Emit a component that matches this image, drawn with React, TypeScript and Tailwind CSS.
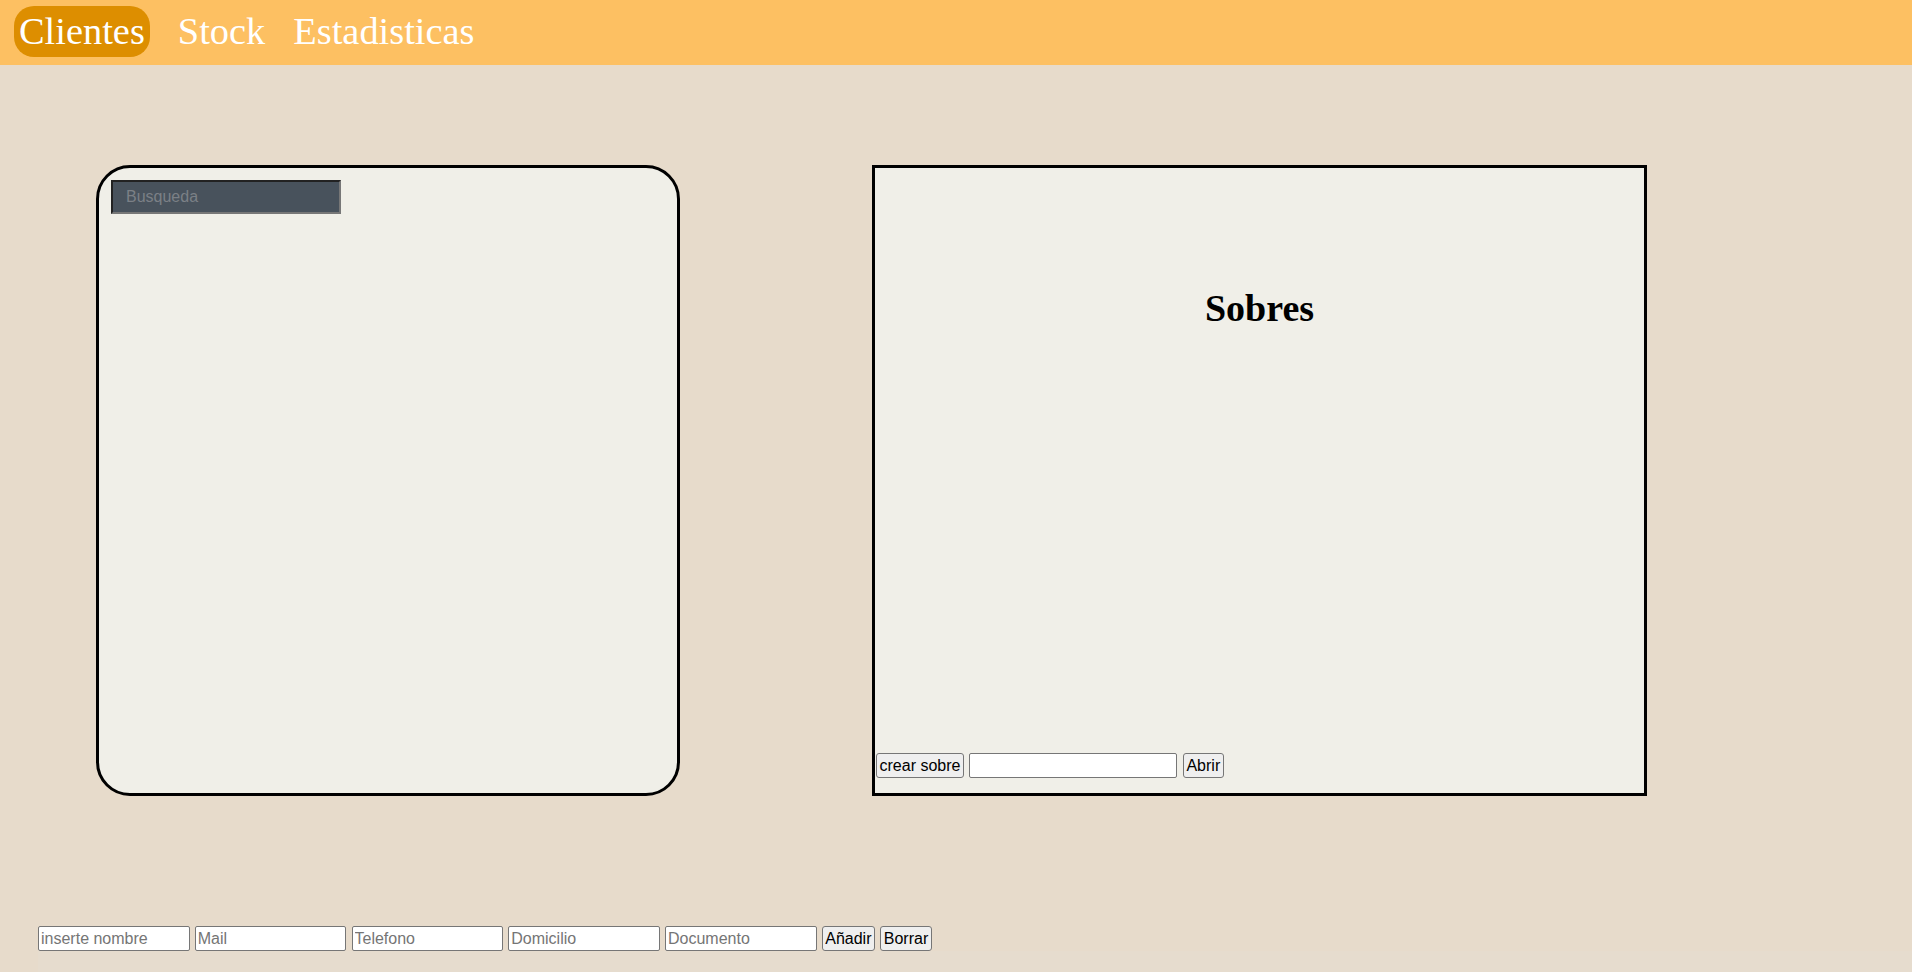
import React from "react";

const fieldClass =
  "w-[151.5px] h-[25px] px-[2px] bg-white border border-[#767676] rounded-[2px] text-[16px] text-black placeholder:text-[#757575] outline-none";
const buttonClass =
  "h-[25px] px-[2.5px] bg-[#EFEFEF] border border-[#767676] rounded-[3px] text-[16px] text-black leading-none";

export default function App() {
  const campos = ["inserte nombre", "Mail", "Telefono", "Domicilio", "Documento"];

  return (
    <div className="min-h-screen flex flex-col bg-[#E7DBCB] font-['Liberation_Sans',Arial,sans-serif]">
      {/* Navbar */}
      <nav className="h-[65px] shrink-0 bg-[#FDC062] flex items-start pt-[6px] font-['Liberation_Serif','Times_New_Roman',serif] text-white text-[38.4px] leading-none">
        <a className="ml-[14px] h-[51px] px-[5px] flex items-center rounded-[20px] bg-[#DD8E00]">Clientes</a>
        <a className="ml-[28px] h-[51px] flex items-center">Stock</a>
        <a className="ml-[28px] h-[51px] flex items-center">Estadisticas</a>
      </nav>

      {/* Paneles */}
      <main className="flex items-start mt-[100px]">
        <section className="ml-[96px] w-[584px] h-[631px] bg-[#F0EFE8] border-[3px] border-black rounded-[34px] p-[12px]">
          <input
            placeholder="Busqueda"
            className="w-[230px] h-[34px] pl-[13px] bg-[#48525C] border-2 border-t-[#222] border-l-[#222] border-b-[#777] border-r-[#777] text-[16px] text-white placeholder:text-[#7B8086] outline-none"
          />
        </section>

        <section className="ml-[192px] w-[775px] h-[631px] bg-[#F0EFE8] border-[3px] border-black flex flex-col">
          <h2 className="mt-[119px] text-center font-['Liberation_Serif','Times_New_Roman',serif] font-bold text-[38px] leading-[1.15] text-black">
            Sobres
          </h2>
          <div className="flex-1" />
          <div className="flex items-center gap-[5.5px] ml-[1px] mb-[15px]">
            <button className={buttonClass}>crear sobre</button>
            <input className="w-[208px] h-[25px] px-[2px] bg-white border border-[#767676] rounded-[2px] text-[16px] outline-none" />
            <button className={buttonClass}>Abrir</button>
          </div>
        </section>
      </main>

      {/* Formulario de alta */}
      <div className="mt-[130px] ml-[38px] flex items-center gap-[5.25px]">
        {campos.map((c) => (
          <input key={c} placeholder={c} className={fieldClass} />
        ))}
        <button className={buttonClass}>Añadir</button>
        <button className={buttonClass}>Borrar</button>
      </div>
      <div className="flex-1 ml-[38px] bg-[#E6DCCE]" />
    </div>
  );
}
